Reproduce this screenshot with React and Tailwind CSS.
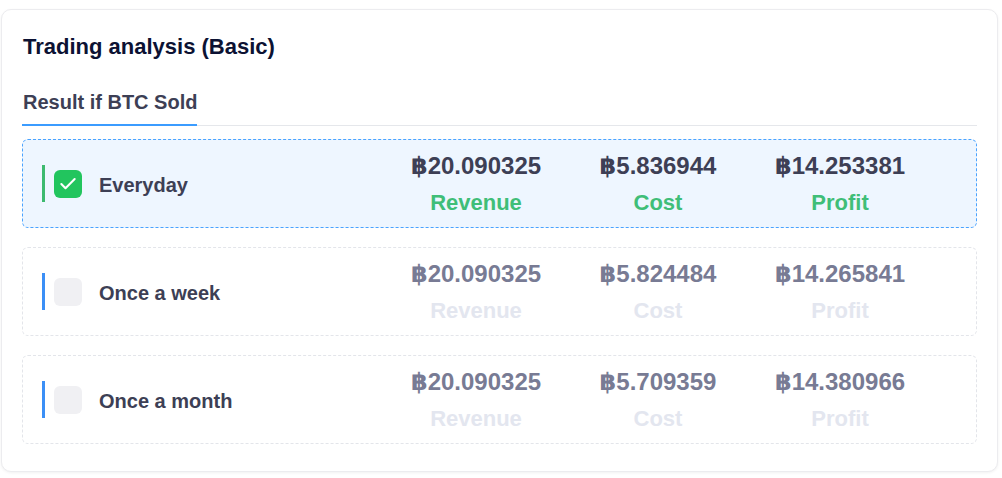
import { Check } from 'lucide-react';

const ROWS = [
  { label: 'Everyday', revenue: '20.090325', cost: '5.836944', profit: '14.253381', active: true },
  { label: 'Once a week', revenue: '20.090325', cost: '5.824484', profit: '14.265841', active: false },
  { label: 'Once a month', revenue: '20.090325', cost: '5.709359', profit: '14.380966', active: false },
];

function Stat({ value, label, active }) {
  return (
    <div className="w-[182px] flex flex-col items-center">
      <div className={`text-[24px] leading-[32px] font-bold ${active ? 'text-[#3d3f55]' : 'text-[#787b94]'}`}>
        <span className="font-['DejaVu_Sans',sans-serif] text-[24px]">฿</span>
        {value}
      </div>
      <div className={`mt-[7px] text-[22px] leading-[28px] font-bold ${active ? 'text-[#3fbe78]' : 'text-[#e3e6ef]'}`}>{label}</div>
    </div>
  );
}

export default function App() {
  return (
    <div className="min-h-screen bg-white pt-[9px] pl-px font-['Liberation_Sans',Arial,sans-serif]">
      <div className="w-[997px] h-[463px] rounded-[10px] border border-[#ececef] bg-white shadow-[0_1px_3px_rgba(0,0,0,0.06)] px-5 pt-[23px]">
        {/* Header */}
        <h2 className="pl-px text-[22px] leading-[28px] font-bold text-[#0c1233]">Trading analysis (Basic)</h2>

        {/* Tabs */}
        <div className="mt-[27px] flex border-b border-[#e5e7eb]">
          <div className="-mb-px pl-px pb-[8px] border-b-2 border-[#3b9cff] text-[20px] leading-[28px] font-bold text-[#3d3f55]">
            Result if BTC Sold
          </div>
        </div>

        {/* Rows */}
        <div className="mt-[13px] flex flex-col gap-[19px]">
          {ROWS.map((row) => (
            <div
              key={row.label}
              className={`h-[89px] flex items-center rounded-[6px] border border-dashed pl-[19px] pr-[45px] ${
                row.active ? 'bg-[#eef6ff] border-[#4aa3ff]' : 'bg-white border-[#e3e5ea]'
              }`}
            >
              <div className="flex-1 flex items-center">
                <div className={`w-[3px] h-[37px] ${row.active ? 'bg-[#3dba6f]' : 'bg-[#3b8ff6]'}`} />
                <div
                  className={`ml-[9px] w-[28px] h-[28px] rounded-[6px] flex items-center justify-center ${
                    row.active ? 'bg-[#22c55e]' : 'bg-[#f0f0f3]'
                  }`}
                >
                  {row.active && <Check className="w-[20px] h-[20px] text-white" strokeWidth={2.5} />}
                </div>
                <span className="ml-[17px] mt-[2px] text-[20px] leading-[28px] font-bold text-[#3d3f55]">{row.label}</span>
              </div>
              <Stat value={row.revenue} label="Revenue" active={row.active} />
              <Stat value={row.cost} label="Cost" active={row.active} />
              <Stat value={row.profit} label="Profit" active={row.active} />
            </div>
          ))}
        </div>
      </div>
    </div>
  );
}
